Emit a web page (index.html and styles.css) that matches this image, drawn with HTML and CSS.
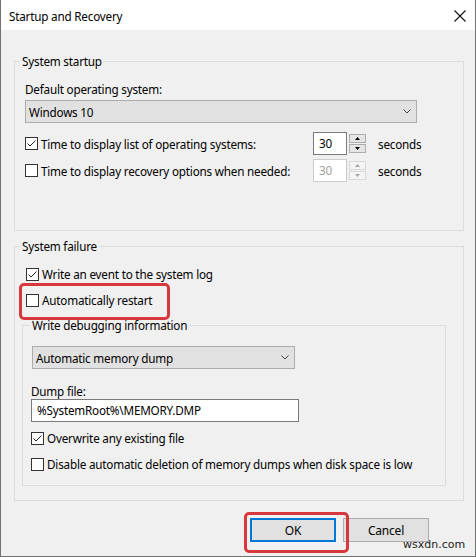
FILE: index.html
```html
<!DOCTYPE html>
<html lang="en">
<head>
<meta charset="utf-8">
<title>Startup and Recovery</title>
<link rel="stylesheet" href="styles.css">
</head>
<body>
<div class="window">
  <div class="titlebar">
    <span class="title">Startup and Recovery</span>
    <svg class="close" width="12" height="12" viewBox="0 0 12 12"><path d="M0.5 0.5 L11.5 11.5 M11.5 0.5 L0.5 11.5" stroke="#111" stroke-width="1.1" fill="none"/></svg>
  </div>
  <div class="client">
    <fieldset class="group group-startup">
      <legend>System startup</legend>
      <div class="group-body startup-body">
        <div class="label">Default operating system:</div>
        <div class="combo combo-os"><span>Windows 10</span><svg class="chev" width="8" height="5" viewBox="0 0 8 5"><path d="M0.5 0.5 L4 4 L7.5 0.5" stroke="#444" fill="none"/></svg></div>
        <div class="spin-row spin-row-first">
          <div class="check"><span class="box"><svg width="11" height="11" viewBox="0 0 11 11"><path d="M1.5 5.5 L4 8 L9.5 2.5" stroke="#222" fill="none"/></svg></span><span>Time to display list of operating systems:</span></div>
          <div class="spin">
            <div class="spin-field">30</div>
            <div class="spin-btns">
              <div class="spin-btn"><svg width="5" height="3" viewBox="0 0 5 3"><path d="M2.5 0 L5 3 L0 3 Z" fill="#000"/></svg></div>
              <div class="spin-btn"><svg width="5" height="3" viewBox="0 0 5 3"><path d="M0 0 L5 0 L2.5 3 Z" fill="#000"/></svg></div>
            </div>
          </div>
          <span class="unit">seconds</span>
        </div>
        <div class="spin-row spin-row-second">
          <div class="check"><span class="box"></span><span>Time to display recovery options when needed:</span></div>
          <div class="spin disabled">
            <div class="spin-field">30</div>
            <div class="spin-btns">
              <div class="spin-btn"><svg width="5" height="3" viewBox="0 0 5 3"><path d="M2.5 0 L5 3 L0 3 Z" fill="#a6a6a6"/></svg></div>
              <div class="spin-btn"><svg width="5" height="3" viewBox="0 0 5 3"><path d="M0 0 L5 0 L2.5 3 Z" fill="#a6a6a6"/></svg></div>
            </div>
          </div>
          <span class="unit">seconds</span>
        </div>
      </div>
    </fieldset>

    <fieldset class="group group-failure">
      <legend>System failure</legend>
      <div class="group-body failure-body">
        <div class="check check-row"><span class="box"><svg width="11" height="11" viewBox="0 0 11 11"><path d="M1.5 5.5 L4 8 L9.5 2.5" stroke="#222" fill="none"/></svg></span><span>Write an event to the system log</span></div>
        <div class="check check-row restart highlighted"><span class="box"></span><span>Automatically restart</span></div>

        <fieldset class="group group-debug">
          <legend>Write debugging information</legend>
          <div class="group-body debug-body">
            <div class="combo combo-dump"><span>Automatic memory dump</span><svg class="chev" width="8" height="5" viewBox="0 0 8 5"><path d="M0.5 0.5 L4 4 L7.5 0.5" stroke="#444" fill="none"/></svg></div>
            <div class="label dump-label">Dump file:</div>
            <div class="textbox">%SystemRoot%\MEMORY.DMP</div>
            <div class="check check-row overwrite"><span class="box"><svg width="11" height="11" viewBox="0 0 11 11"><path d="M1.5 5.5 L4 8 L9.5 2.5" stroke="#222" fill="none"/></svg></span><span>Overwrite any existing file</span></div>
            <div class="check check-row disable"><span class="box"></span><span>Disable automatic deletion of memory dumps when disk space is low</span></div>
          </div>
        </fieldset>
      </div>
    </fieldset>

    <div class="buttons">
      <button class="btn btn-default highlighted">OK</button>
      <button class="btn">Cancel</button>
    </div>
  </div>
  <div class="watermark">wsxdn.com</div>
</div>
</body>
</html>
```

FILE: styles.css
```css
* { box-sizing: border-box; }

html, body {
  margin: 0;
  padding: 0;
}

body {
  width: 476px;
  height: 557px;
  overflow: hidden;
  background: #f0f0f0;
  font-family: "Noto Sans", "Open Sans", sans-serif;
  font-size: 11.7px;
  letter-spacing: -0.2px;
  line-height: 16px;
  color: #000;
}

.window {
  position: relative;
  width: 476px;
  height: 557px;
  border: 1px solid #727272;
  border-top: none;
  background: #f0f0f0;
  display: flex;
  flex-direction: column;
}

.titlebar {
  flex: none;
  height: 30px;
  background: #fff;
  display: flex;
  align-items: center;
  justify-content: space-between;
  padding: 1px 9px 0 8px;
}

.client {
  padding: 23px 11px 0 13px;
}

.group {
  margin: 0;
  padding: 0;
  border: 1px solid #dcdcdc;
  min-width: 0;
}

.group legend {
  padding: 0 2px;
  margin-left: 5px;
  line-height: 16px;
}

.group-startup {
  width: 450px;
  height: 178px;
}

.startup-body {
  padding: 12px 0 0 10px;
}

.label {
  height: 16px;
}

.combo {
  display: flex;
  align-items: center;
  justify-content: space-between;
  height: 23px;
  background: #e1e1e1;
  border: 1px solid #adadad;
  padding: 0 5px 0 3px;
}

.combo-os {
  margin-top: 3px;
  width: 392px;
}

.chev { display: block; }

.spin-row {
  display: grid;
  grid-template-columns: 288px 53px auto;
  align-items: center;
  height: 23px;
}

.spin-row-first { margin-top: 9px; }
.spin-row-second { margin-top: 4px; }

.check {
  display: flex;
  align-items: center;
  gap: 3px;
  white-space: nowrap;
}

.box {
  flex: none;
  width: 13px;
  height: 13px;
  border: 1px solid #333;
  background: #fff;
  display: flex;
  align-items: center;
  justify-content: center;
}

.box svg { display: block; }

.spin {
  display: flex;
  height: 23px;
}

.spin-field {
  width: 34px;
  height: 23px;
  border: 1px solid #7a7a7a;
  background: #fff;
  padding-left: 5px;
  line-height: 21px;
}

.spin-btns {
  margin-left: 2px;
  width: 17px;
  padding-top: 2px;
  display: flex;
  flex-direction: column;
  gap: 1px;
}

.spin-btn {
  height: 9px;
  border: 1px solid #adadad;
  background: #e5e5e5;
  display: flex;
  align-items: center;
  justify-content: center;
}

.spin-btn svg { display: block; }

.spin.disabled .spin-field {
  border-color: #cccccc;
  color: #a0a0a0;
}

.spin.disabled .spin-btn {
  border-color: #d9d9d9;
  background: #f4f4f4;
}

.unit {
  margin-left: 12px;
}

.group-failure {
  margin-top: 7px;
  width: 450px;
}

.failure-body {
  padding: 12px 0 14px 7px;
}

.check-row {
  height: 16px;
}

.failure-body > .check-row {
  margin-left: 4px;
}

.restart {
  margin-top: 10px;
}

.highlighted {
  position: relative;
}

.restart.highlighted::after {
  content: "";
  position: absolute;
  left: -7px;
  top: -9px;
  width: 145px;
  height: 31px;
  border: 3px solid #d7383e;
  border-radius: 5px;
}

.group-debug {
  margin-top: 9px;
  width: 424px;
}

.group-debug legend {
  margin-left: 7px;
}

.debug-body {
  padding: 13px 0 13px 8px;
}

.combo-dump {
  width: 263px;
  margin-left: 1px;
}

.dump-label {
  margin-top: 14px;
}

.textbox {
  width: 268px;
  height: 23px;
  border: 1px solid #7a7a7a;
  background: #fff;
  padding-left: 5px;
  line-height: 21px;
}

.overwrite { margin-top: 8px; }
.disable { margin-top: 10px; }

.buttons {
  display: flex;
  justify-content: flex-end;
  gap: 7px;
  margin-top: 17px;
  padding-right: 35px;
}

.btn {
  width: 86px;
  height: 24px;
  margin: 0;
  padding: 0;
  border: 1px solid #adadad;
  background: #e1e1e1;
  font-family: inherit;
  font-size: 12px;
  letter-spacing: -0.2px;
  color: #000;
}

.btn-default {
  border: 2px solid #0078d7;
}

.btn.highlighted::after {
  content: "";
  position: absolute;
  left: -8px;
  top: -8px;
  width: 99px;
  height: 35px;
  border: 3px solid #d7383e;
  border-radius: 5px;
}

.watermark {
  position: absolute;
  left: 402px;
  top: 538px;
  font-family: "DejaVu Sans", sans-serif;
  font-size: 11px;
  letter-spacing: 0;
  line-height: 14px;
  color: #1c1c1c;
}
```
